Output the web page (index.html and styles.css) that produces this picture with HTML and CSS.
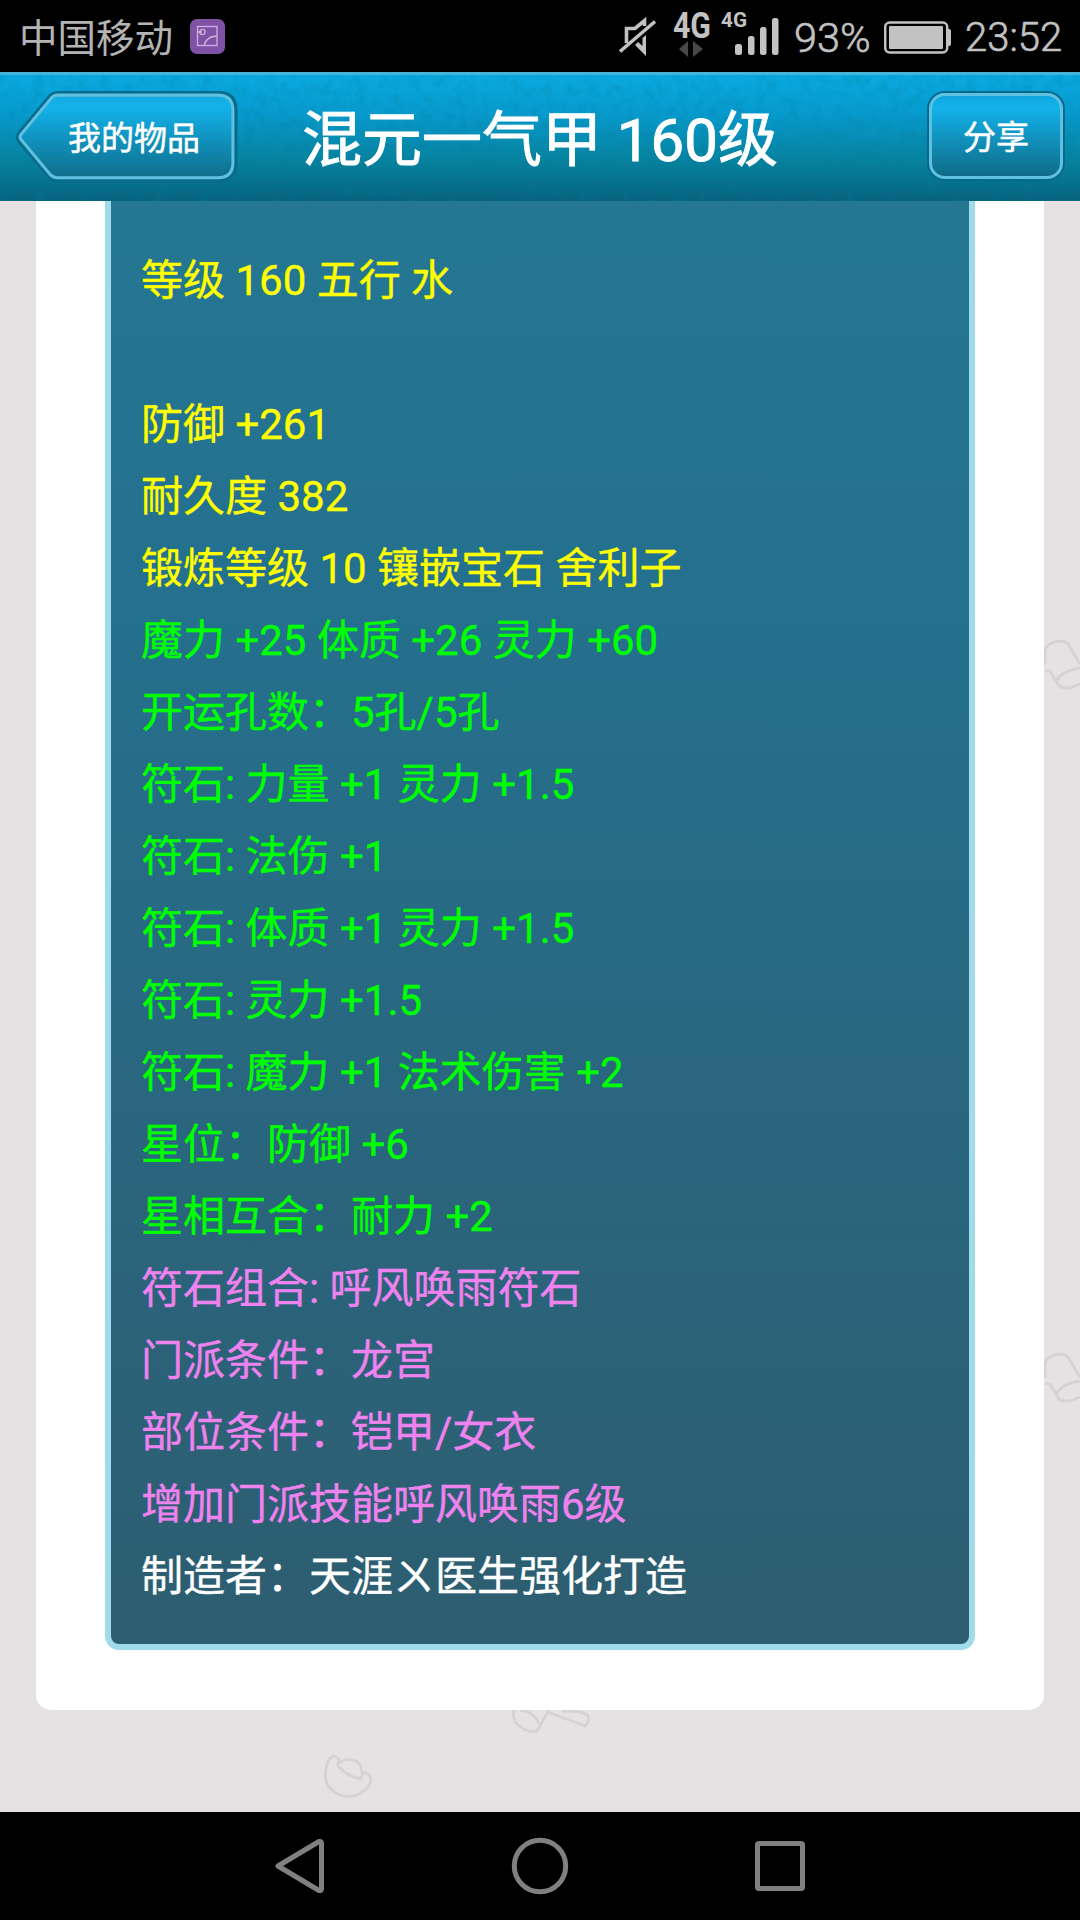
FILE: index.html
```html
<!DOCTYPE html>
<html lang="zh-CN">
<head>
    <meta charset="UTF-8">
    <meta name="viewport" content="width=device-width, initial-scale=1.0">
    <title>混元一气甲 160级</title>
    <link rel="stylesheet" href="styles.css">
</head>
<body>
    <div class="statusbar">
        <span class="carrier">中国移动</span>
        <svg class="app-icon" width="35" height="35" viewBox="0 0 35 35">
            <rect width="35" height="35" rx="7" fill="#8052a6"/>
            <g fill="none" stroke="#cdb2e0" stroke-width="1.3">
                <rect x="7.5" y="7.5" width="19.5" height="19"/>
                <circle cx="12.5" cy="13" r="2.6"/>
                <path d="M8 13h4M14 27c1-6 6-10 13-10"/>
            </g>
        </svg>
        <svg class="signal" width="162" height="64" viewBox="0 0 162 64">
            <g fill="none" stroke="#c2c2c2" stroke-width="3.6">
                <path d="M8.500 43V28.500H17L26.500 20.500V26"/>
                <path d="M2 51.500L37 21.500"/>
            </g>
            <path d="M28 35V56L17 45L20 42L24.500 46V38Z" fill="#c2c2c2"/>
            <text class="net" x="55" y="38" textLength="38" lengthAdjust="spacingAndGlyphs">4G</text>
            <path d="M70 41v16l-9-8zM75 41v16l10-8z" fill="#484848"/>
            <text class="net-small" x="103" y="27" textLength="26" lengthAdjust="spacingAndGlyphs">4G</text>
            <g fill="#c2c2c2">
                <rect x="117" y="44" width="7" height="11" rx="2.500"/>
                <rect x="130" y="36" width="6.500" height="19" rx="2.500"/>
                <rect x="142" y="27" width="6.500" height="28" rx="2.500"/>
                <rect x="154" y="18" width="6.500" height="37" rx="2.500"/>
            </g>
        </svg>
        <span class="percent">93%</span>
        <svg class="battery" width="68" height="34" viewBox="0 0 68 34">
            <rect x="1.200" y="1.500" width="62" height="30" rx="4.500" fill="none" stroke="#c2c2c2" stroke-width="2.500"/>
            <rect x="5" y="5" width="54" height="23" rx="1" fill="#c2c2c2"/>
            <path d="M63 8h2a2 2 0 0 1 2 2v13a2 2 0 0 1-2 2h-2z" fill="#c2c2c2"/>
        </svg>
        <span class="clock">23:52</span>
    </div>

    <div class="header">
        <svg class="grain" width="1080" height="126">
            <filter id="noise" x="0" y="0" width="1" height="1">
                <feTurbulence type="fractalNoise" baseFrequency="0.09" numOctaves="3" seed="4"/>
                <feColorMatrix values="0 0 0 0 0  0 0 0 0 0.2  0 0 0 0 0.3  1.4 0 0 0 -0.6"/>
            </filter>
            <rect width="1080" height="126" filter="url(#noise)"/>
        </svg>
        <a class="back">
            <svg class="back-shape" width="224" height="95" viewBox="0 0 222 92" preserveAspectRatio="none">
                <defs>
                    <linearGradient id="btn" x1="0" y1="0" x2="0" y2="1">
                        <stop offset="0" stop-color="#12a8dd"/>
                        <stop offset="0.150" stop-color="#12b2ea"/>
                        <stop offset="1" stop-color="#0f6b87"/>
                    </linearGradient>
                </defs>
                <path d="M42 3.500H202Q218 3.500 218 19.500V71Q218 87 202 87H42Q37 87 33 82L5 50Q2 46 5 42L33 9Q37 3.500 42 3.500Z" fill="url(#btn)" stroke="#086a8d" stroke-width="5"/>
                <path d="M42 5H201Q216 5 216 20V70Q216 85 201 85H42Q38 85 35 82L6 48Q4 46 6 43L35 9Q38 5 42 5Z" fill="none" stroke="#5fc0df" stroke-width="3"/>
            </svg>
            <span>我的物品</span>
        </a>
        <h1>混元一气甲 160级</h1>
        <a class="share">分享</a>
    </div>

    <div class="page">
        <svg class="doodles" width="1080" height="1611" viewBox="0 201 1080 1611">
            <g fill="none" stroke="#d5d2d3" stroke-width="2.800" stroke-linejoin="round">
                <path id="cup" d="M1045 655Q1044 646 1052 643Q1063 639 1068 644L1080 664M1057 680Q1062 671 1080 668M1045 671H1050L1059 686Q1066 691 1080 684M1045 655V665"/>
                <use href="#cup" y="713"/>
                <path d="M338 1763Q342 1758 333 1756C325 1759 323 1780 329 1787C338 1798 354 1800 365 1790C374 1782 372 1772 363 1773L361 1779Q348 1777 338 1766ZM340 1763C346 1757 362 1758 362 1773"/>
                <path d="M514 1710Q512 1716 516 1723Q527 1734 537 1731L550 1708M520 1710Q535 1712 539 1724M548 1712L585 1726Q590 1721 588 1716Q585 1711 562 1711"/>
            </g>
        </svg>
        <div class="card">
            <div class="item-box">
                <p class="yellow">等级 160 五行 水</p>
                <p class="yellow">&nbsp;</p>
                <p class="yellow">防御 +261</p>
                <p class="yellow">耐久度 382</p>
                <p class="yellow">锻炼等级 10 镶嵌宝石 舍利子</p>
                <p class="green">魔力 +25 体质 +26 灵力 +60</p>
                <p class="green">开运孔数：5孔/5孔</p>
                <p class="green">符石: 力量 +1 灵力 +1.5</p>
                <p class="green">符石: 法伤 +1</p>
                <p class="green">符石: 体质 +1 灵力 +1.5</p>
                <p class="green">符石: 灵力 +1.5</p>
                <p class="green">符石: 魔力 +1 法术伤害 +2</p>
                <p class="green">星位：防御 +6</p>
                <p class="green">星相互合：耐力 +2</p>
                <p class="violet">符石组合: 呼风唤雨符石</p>
                <p class="violet">门派条件：龙宫</p>
                <p class="violet">部位条件：铠甲/女衣</p>
                <p class="violet">增加门派技能呼风唤雨6级</p>
                <p>制造者：天涯ㄨ医生强化打造</p>
            </div>
        </div>
    </div>

    <div class="navbar">
        <svg width="54" height="60" viewBox="0 0 54 60"><path d="M5 30L46 5.500Q48.500 5 48.500 7V53Q48.500 55 46 54.500Z"/></svg>
        <svg width="58" height="60" viewBox="0 0 58 60"><circle cx="29" cy="30" r="25.700"/></svg>
        <svg width="54" height="60" viewBox="0 0 54 60"><rect x="4.500" y="7.500" width="45" height="45" rx="1.500"/></svg>
    </div>
</body>
</html>
```

FILE: styles.css
```css
body {
    margin: 0;
    width: 1080px;
    height: 1920px;
    overflow: hidden;
    font-family: Roboto, 'Noto Sans CJK SC', sans-serif;
    background-color: #000;
    color: #fff;
}

.statusbar {
    height: 72px;
    display: flex;
    align-items: center;
    box-sizing: border-box;
    padding: 0 18px 0 19px;
    background-color: #000;
    color: #c2c2c2;
    font-size: 40px;
    line-height: 72px;
    white-space: nowrap;
}

.carrier {
    font-size: 38.5px;
    padding-top: 6px;
    color: #b4b4b4;
}

.app-icon {
    margin-left: 17px;
}

.signal {
    margin-left: auto;
    margin-bottom: 8px;
}

.net {
    font-size: 36px;
    font-weight: bold;
    fill: #c2c2c2;
}

.net-small {
    font-size: 20px;
    font-weight: bold;
    fill: #c2c2c2;
}

.percent {
    margin-left: 14px;
    padding-top: 3px;
    width: 77px;
    font-size: 41.5px;
    font-weight: 300;
    -webkit-text-stroke: 0.6px #c2c2c2;
}

.battery {
    margin-left: 13px;
    margin-top: 3px;
}

.clock {
    margin-left: 13px;
    padding-top: 3px;
    width: 97px;
    font-weight: 300;
    -webkit-text-stroke: 0.6px #c2c2c2;
}

.header {
    position: relative;
    height: 129px;
    display: flex;
    justify-content: space-between;
    box-sizing: border-box;
    padding: 18px 17px 0 15px;
    border-top: 3px solid #45b4d8;
    background: linear-gradient(#0aa9e0, #079bce 30%, #07829f 68%, #07637e);
}

.grain {
    position: absolute;
    left: 0;
    top: 0;
    opacity: 0.4;
}

.back {
    position: relative;
    width: 222px;
    height: 92px;
    font-size: 33px;
    line-height: 92px;
    -webkit-text-stroke: 0.5px #fff;
}

.back-shape {
    position: absolute;
    left: 0;
    top: -3px;
}

.back span {
    position: relative;
    display: block;
    padding-left: 53px;
}

.header h1 {
    position: relative;
    margin: 0;
    padding-right: 86px;
    font-size: 60px;
    font-weight: normal;
    line-height: 96px;
    -webkit-text-stroke: 0.9px #fff;
}

.share {
    position: relative;
    box-sizing: border-box;
    width: 134px;
    height: 86px;
    border: 3px solid #5fc0df;
    border-radius: 16px;
    box-shadow: 0 0 0 2px #086a8d;
    background: linear-gradient(#0fa6dc, #12b2ea 15%, #0f6b87);
    font-size: 33px;
    line-height: 84px;
    text-align: center;
    -webkit-text-stroke: 0.5px #fff;
}

.page {
    position: relative;
    height: 1611px;
    background-color: #e6e2e3;
}

.doodles {
    position: absolute;
    left: 0;
    top: 0;
}

.card {
    position: relative;
    box-sizing: border-box;
    width: 1008px;
    height: 1509px;
    margin: 0 36px;
    padding: 0 69px;
    border-radius: 0 0 15px 15px;
    background-color: #fff;
}

.item-box {
    box-sizing: border-box;
    height: 1449px;
    padding: 43px 30px 0;
    border: 6px solid #9fdbea;
    border-top: none;
    border-radius: 0 0 14px 14px;
    background: linear-gradient(#247792, #24718f 25%, #296780 60%, #2d5d70);
}

.item-box p {
    margin: 0;
    height: 72px;
    font-size: 42px;
    line-height: 73px;
    white-space: nowrap;
    -webkit-text-stroke: 0.35px;
}

.item-box .yellow {
    color: #ffff00;
}

.item-box .green {
    color: #00ff00;
}

.item-box .violet {
    color: #ee82ee;
}

.navbar {
    height: 108px;
    display: flex;
    justify-content: space-between;
    align-items: center;
    box-sizing: border-box;
    padding: 0 273px;
    background-color: #000;
}

.navbar svg {
    fill: none;
    stroke: #808080;
    stroke-width: 5;
    stroke-linejoin: round;
}
```
